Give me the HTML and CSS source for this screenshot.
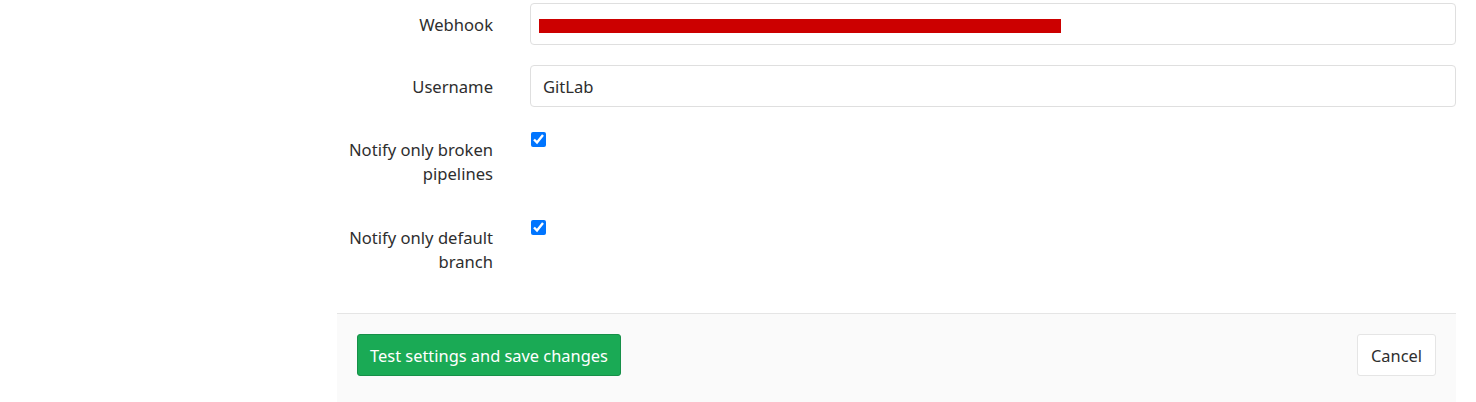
FILE: index.html
```html
<!DOCTYPE html>
<html>
<head>
<meta charset="utf-8">
<link rel="stylesheet" href="styles.css">
</head>
<body>
<div class="page">
  <form class="form">
    <div class="row">
      <label class="label label-input">Webhook</label>
      <div class="control">
        <div class="input-wrap">
          <input class="input" type="text" value="">
          <span class="redact"></span>
        </div>
      </div>
    </div>
    <div class="row">
      <label class="label label-input">Username</label>
      <div class="control"><input class="input" type="text" value="GitLab"></div>
    </div>
    <div class="row">
      <label class="label">Notify only broken<br>pipelines</label>
      <div class="control"><input class="check" type="checkbox" checked></div>
    </div>
    <div class="row">
      <label class="label">Notify only default<br>branch</label>
      <div class="control"><input class="check" type="checkbox" checked></div>
    </div>
    <div class="footer">
      <button type="button" class="btn btn-success">Test settings and save changes</button>
      <button type="button" class="btn btn-default">Cancel</button>
    </div>
  </form>
</div>
</body>
</html>
```

FILE: styles.css
```css
html, body {
  margin: 0;
  padding: 0;
  background: #fff;
}
body {
  font-family: "Noto Sans", "Open Sans", sans-serif;
  font-size: 16.6px;
  color: #2e2e2e;
}
.page {
  padding: 3px 20px 0 337px;
}
.form {
  display: flex;
  flex-direction: column;
  gap: 20px;
}
.row {
  display: grid;
  grid-template-columns: 156px 1fr;
  column-gap: 37px;
  align-items: start;
}
.label {
  text-align: right;
  line-height: 24px;
  padding: 11px 0 9px;
  font-size: 16.6px;
  white-space: nowrap;
}
.label-input {
  padding: 10px 0 8px;
}
.control {
  min-width: 0;
}
.input-wrap {
  position: relative;
}
.input {
  box-sizing: border-box;
  display: block;
  width: 100%;
  height: 42px;
  border: 1px solid #dfdfdf;
  border-radius: 4px;
  padding: 0 12px;
  font-family: inherit;
  font-size: 16.6px;
  color: #2e2e2e;
  background: #fff;
  outline: none;
}
.redact {
  position: absolute;
  left: 9px;
  top: 16px;
  width: 522px;
  height: 14px;
  background: #cc0000;
}
.check {
  display: block;
  width: 15px;
  height: 15px;
  margin: 5px 0 0 1px;
  accent-color: #0075ff;
}
.footer {
  margin-top: 10px;
  border-top: 1px solid #e5e5e5;
  background: #fafafa;
  padding: 20px 20px 26px 20px;
  display: flex;
  justify-content: space-between;
  align-items: center;
}
.btn {
  box-sizing: border-box;
  height: 42px;
  border-radius: 3px;
  font-family: inherit;
  font-size: 16.4px;
  padding: 0 10px;
  cursor: pointer;
  white-space: nowrap;
}
.btn-success {
  width: 264px;
  background: #1aaa55;
  border: 1px solid #168f48;
  color: #fff;
}
.btn-default {
  width: 79px;
  background: #fff;
  border: 1px solid #e5e5e5;
  color: #2e2e2e;
}
```
